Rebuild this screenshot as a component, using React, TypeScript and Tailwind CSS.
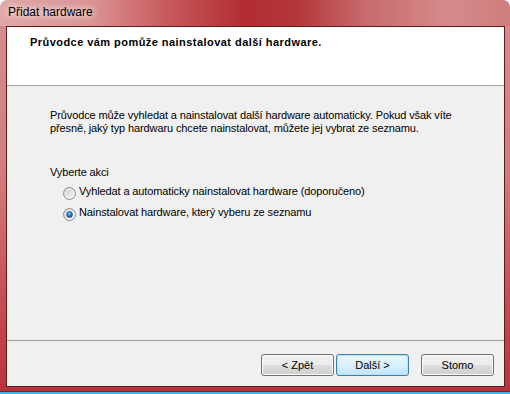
const Radio = ({ checked }: { checked?: boolean }) => (
  <svg width="13" height="13" viewBox="0 0 13 13" className="shrink-0 mt-[2px]">
    <defs>
      <linearGradient id="rf" x1="0" y1="0" x2="1" y2="1">
        <stop offset="0" stopColor="#cbcbcb" />
        <stop offset="1" stopColor="#f8f8f8" />
      </linearGradient>
      <radialGradient id="rd" cx="0.45" cy="0.4" r="0.6">
        <stop offset="0" stopColor="#8fd0ff" />
        <stop offset="0.5" stopColor="#1d7fd6" />
        <stop offset="1" stopColor="#173f73" />
      </radialGradient>
    </defs>
    <circle cx="6.5" cy="6.5" r="6" fill="url(#rf)" stroke="#8f8f8f" strokeWidth="1" />
    <circle cx="6.5" cy="6.5" r="4.3" fill="none" stroke="#ffffff" strokeOpacity="0.6" strokeWidth="1" />
    {checked && <circle cx="6.5" cy="6.5" r="3.2" fill="url(#rd)" />}
  </svg>
);

const Button = ({ label, primary }: { label: string; primary?: boolean }) => (
  <button
    className={
      primary
        ? "w-[73px] h-[22px] rounded-[3px] border border-[#3c7fb1] bg-gradient-to-b from-[#eaf6fd] via-[#d9f0fc] to-[#bee6fd] shadow-[inset_0_0_0_1px_#b6e3f9] text-[11px] text-black"
        : "w-[73px] h-[22px] rounded-[3px] border border-[#707070] bg-[linear-gradient(to_bottom,#f2f2f2_0%,#ebebeb_50%,#dddddd_51%,#cfcfcf_100%)] shadow-[inset_0_0_0_1px_#fcfcfc] text-[11px] text-black"
    }
  >
    {label}
  </button>
);

export default function App() {
  return (
    <div className="w-[510px] h-[394px] bg-white flex flex-col overflow-hidden font-['Liberation_Sans',Arial,sans-serif] text-[11px] leading-[13px] text-black">
      <div className="h-[392px] flex flex-col rounded-t-[7px] overflow-hidden">
        {/* title bar */}
        <div className="h-[26px] shrink-0 pl-[8px] pt-[5px] bg-[linear-gradient(to_right,#e0a8a8_0%,#da9494_18%,#c85c60_32%,#b22d31_48%,#b3363a_58%,#c86c6e_72%,#d58a8a_88%,#d07c7c_100%)]">
          <span className="text-[12px] leading-[15px] text-black [text-shadow:0_0_6px_#ffffff,0_0_10px_#ffffffb0]">
            Přidat hardware
          </span>
        </div>

        {/* frame + client */}
        <div className="flex-1 flex flex-col pl-[6px] pr-[5px] pb-[4px] border-b border-[#7d2327] bg-[linear-gradient(to_bottom,#d58c8c_0%,#d27c7e_40%,#c4484c_80%,#b9343a_100%)]">
          <div className="flex-1 flex flex-col border border-[#5b1c1c] bg-[#f0f0f0]">
            <div className="h-[59px] shrink-0 bg-white border-b border-[#a0a0a0] pl-[23px] pt-[9px] font-bold tracking-[0.45px]">
              Průvodce vám pomůže nainstalovat další hardware.
            </div>

            <div className="flex-1 pl-[43px] pt-[23px] tracking-[-0.12px]">
              <p>
                Průvodce může vyhledat a nainstalovat další hardware automaticky. Pokud však víte
                <br />
                přesně, jaký typ hardwaru chcete nainstalovat, můžete jej vybrat ze seznamu.
              </p>
              <p className="mt-[31px]">Vyberte akci</p>
              <div className="mt-[6px] pl-[13px] flex flex-col">
                <div className="h-[21px] flex items-start gap-[3px]">
                  <Radio />
                  <span>Vyhledat a automaticky nainstalovat hardware (doporučeno)</span>
                </div>
                <div className="h-[21px] flex items-start gap-[3px]">
                  <Radio checked />
                  <span>Nainstalovat hardware, který vyberu ze seznamu</span>
                </div>
              </div>
            </div>

            <div className="h-[46px] shrink-0 border-t border-[#a0a0a0] flex justify-end items-start pt-[13px] pr-[10px]">
              <Button label="< Zpět" />
              <div className="w-[2px]" />
              <Button label="Další >" primary />
              <div className="w-[12px]" />
              <Button label="Stomo" />
            </div>
          </div>
        </div>
      </div>
      <div className="h-[2px] bg-[#3fb3e3]" />
    </div>
  );
}
